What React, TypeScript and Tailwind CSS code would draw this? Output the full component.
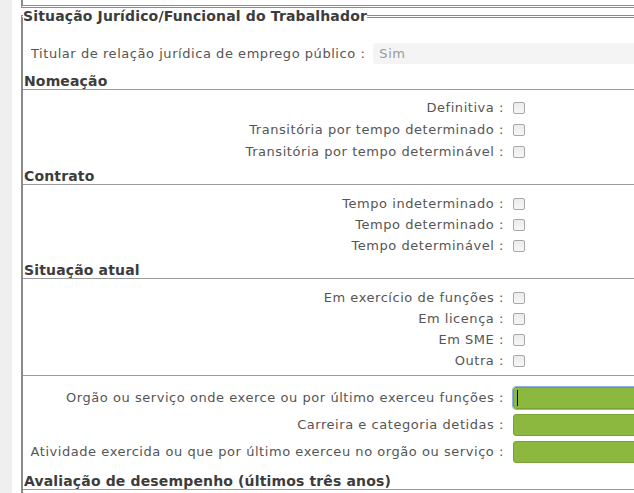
import React from "react"

const nomeacao = [
  "Definitiva",
  "Transitória por tempo determinado",
  "Transitória por tempo determinável",
]

const contrato = ["Tempo indeterminado", "Tempo determinado", "Tempo determinável"]

const situacao = ["Em exercício de funções", "Em licença", "Em SME", "Outra"]

const campos = [
  "Orgão ou serviço onde exerce ou por último exerceu funções",
  "Carreira e categoria detidas",
  "Atividade exercida ou que por último exerceu no orgão ou serviço",
]

function Checkbox() {
  return (
    <span className="ml-[9px] inline-block w-[12px] h-[12px] rounded-[2px] border border-[#a8a8a8] bg-gradient-to-b from-[#ececec] to-[#f6f6f6]" />
  )
}

function Heading({ children, className = "" }: { children: React.ReactNode; className?: string }) {
  return (
    <div
      className={
        "pl-[1px] font-bold text-[14px] tracking-[0.15px] leading-[16px] text-[#3c3c3c] border-b border-[#9a9a9a] " +
        className
      }
    >
      {children}
    </div>
  )
}

function CheckRow({ label, tall }: { label: string; tall?: boolean }) {
  return (
    <div className={"flex items-center " + (tall ? "h-[22px]" : "h-[21px]")}>
      <div className="w-[481px] text-right whitespace-nowrap">{label} :</div>
      <Checkbox />
    </div>
  )
}

export default function App() {
  return (
    <div className="w-[634px] h-[493px] overflow-hidden flex bg-white font-['DejaVu_Sans',sans-serif] text-[13px] tracking-[0.55px] text-[#555]">
      <div className="w-[12px] shrink-0 bg-[#efefef]" />
      <div className="flex-1 pl-[9px]">
        {/* previous block */}
        <div className="h-[8px] w-[720px] border-l-2 border-b-[3px] [border-style:none_none_double_solid] border-[#8a8a8a]" />

        <fieldset className="w-[720px] border-l-2 border-t-[3px] [border-style:double_none_none_solid] border-[#8a8a8a]">
          <legend className="font-bold text-[14px] tracking-[0.15px] leading-[16px] text-[#3c3c3c]">
            Situação Jurídico/Funcional do Trabalhador
          </legend>

          <div className="flex items-center pl-[8px] pt-[19px]">
            <span className="whitespace-nowrap">Titular de relação jurídica de emprego público :</span>
            <div className="ml-[8px] w-[300px] h-[21px] shrink-0 rounded-[3px] bg-[#f4f4f4] pl-[6px] leading-[21px] text-[#9a9a9a]">
              Sim
            </div>
          </div>

          <Heading className="mt-[9px]">Nomeação</Heading>
          <div className="pt-[7px]">
            {nomeacao.map((l) => (
              <CheckRow key={l} label={l} tall />
            ))}
          </div>

          <Heading className="mt-[5px]">Contrato</Heading>
          <div className="pt-[8px]">
            {contrato.map((l) => (
              <CheckRow key={l} label={l} />
            ))}
          </div>

          <Heading className="mt-[6px]">Situação atual</Heading>
          <div className="pt-[8px]">
            {situacao.map((l) => (
              <CheckRow key={l} label={l} />
            ))}
          </div>
          <div className="mt-[4px] border-b border-[#9a9a9a]" />

          <div className="pt-[8px]">
            {campos.map((l, i) => (
              <div key={l} className="flex items-center h-[27px]">
                <div className="w-[481px] text-right whitespace-nowrap">{l} :</div>
                <div
                  className={
                    "relative ml-[9px] w-[200px] h-[22px] shrink-0 rounded-[3px] border border-[#78a334] bg-[#8cb83f] " +
                    (i === 0 ? "outline outline-1 outline-[#8db1e2]" : "")
                  }
                >
                  {i === 0 && <span className="absolute left-[3px] top-[2px] w-[1px] h-[16px] bg-black" />}
                </div>
              </div>
            ))}
          </div>

          <Heading className="mt-[8px]">Avaliação de desempenho (últimos três anos)</Heading>
          <div className="h-[40px]" />
        </fieldset>
      </div>
    </div>
  )
}
